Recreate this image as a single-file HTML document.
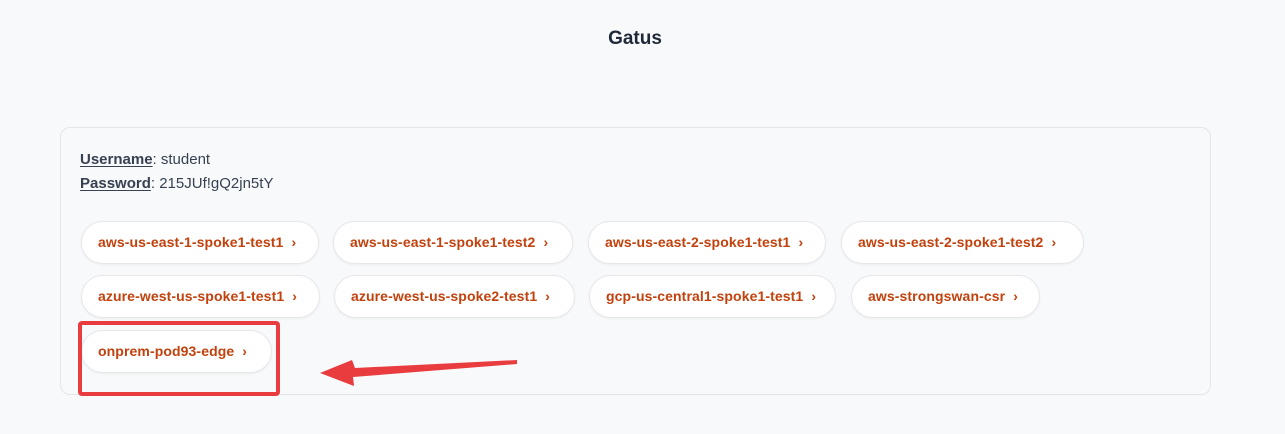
<!DOCTYPE html>
<html><head><style>
body{margin:0;width:1285px;height:434px;background:#f8f9fb;font-family:"Liberation Sans",sans-serif;position:relative;overflow:hidden}
h1{position:absolute;top:28px;left:0;width:1270px;text-align:center;margin:0;font-size:19px;font-weight:bold;color:#1f2937}
.card{position:absolute;left:60px;top:127px;width:1149px;height:266px;border:1px solid #e2e5ea;border-radius:10px;background:#f8f9fb}
.cred{position:absolute;left:80px;font-size:15px;color:#374151}
.cred b{text-decoration:underline;text-underline-offset:2px}
.p{position:absolute;height:43px;box-sizing:border-box;border:1px solid #e5e7eb;border-radius:22px;background:#fff;color:#c2410c;font-size:14px;font-weight:600;line-height:41px;padding-left:16px;box-shadow:0 1px 2px rgba(0,0,0,.05);letter-spacing:0.1px}
.p span{margin-left:8px;font-weight:700}
</style></head><body>
<h1>Gatus</h1>
<div class="card"></div>
<div class="cred" style="top:151px"><b>Username</b>: student</div>
<div class="cred" style="top:175px"><b>Password</b>: 215JUf!gQ2jn5tY</div>
<div class="p" style="left:81px;top:221px;width:238px">aws-us-east-1-spoke1-test1<span>›</span></div>
<div class="p" style="left:333px;top:221px;width:240px">aws-us-east-1-spoke1-test2<span>›</span></div>
<div class="p" style="left:588px;top:221px;width:238px">aws-us-east-2-spoke1-test1<span>›</span></div>
<div class="p" style="left:841px;top:221px;width:243px">aws-us-east-2-spoke1-test2<span>›</span></div>
<div class="p" style="left:81px;top:275px;width:239px">azure-west-us-spoke1-test1<span>›</span></div>
<div class="p" style="left:334px;top:275px;width:241px">azure-west-us-spoke2-test1<span>›</span></div>
<div class="p" style="left:589px;top:275px;width:247px">gcp-us-central1-spoke1-test1<span>›</span></div>
<div class="p" style="left:851px;top:275px;width:189px">aws-strongswan-csr<span>›</span></div>
<div class="p" style="left:81px;top:330px;width:191px">onprem-pod93-edge<span>›</span></div>
<svg style="position:absolute;left:0;top:0" width="1285" height="434">
<rect x="80" y="323" width="198" height="71" fill="none" stroke="#e83c3f" stroke-width="4" rx="2"/>
<path d="M517 360 L355 368 L352 360 L320 373 L354 386 L353 377 L517 364 Z" fill="#e83c3f"/>
</svg>
</body></html>
